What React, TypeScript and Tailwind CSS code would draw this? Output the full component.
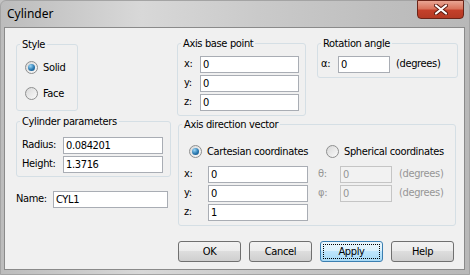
import type { ReactNode } from 'react';

const uiFont = { fontFamily: '"DejaVu Sans Condensed", "Liberation Sans", sans-serif' };

const Radio = ({ checked, label }: { checked?: boolean; label: string }) => (
  <label className="flex h-[13px] items-center gap-[5px] leading-[13px]">
    <span className="flex h-[13px] w-[13px] items-center justify-center rounded-full border border-[#8e8f8f] bg-[linear-gradient(135deg,#d8d8d8,#fafafa)]">
      {checked && (
        <span className="h-[7px] w-[7px] rounded-full bg-[radial-gradient(circle_at_35%_30%,#9ad6f7,#2a79b0_55%,#0f4a7a)]" />
      )}
    </span>
    <span>{label}</span>
  </label>
);

const Field = ({ value, width, disabled }: { value: string; width: string; disabled?: boolean }) => (
  <div
    className={`h-[17px] ${width} border pl-[2px] leading-[15px] ${
      disabled ? 'border-[#c5c5c5] bg-[#f2f2f2] text-[#969696]' : 'border-[#a9adb4] bg-white text-black'
    }`}
  >
    {value}
  </div>
);

const GroupBox = ({ title, className, children }: { title: string; className: string; children: ReactNode }) => (
  <fieldset className={`min-w-0 rounded-[3px] border border-[#d5dfe5] pl-[3px] ${className}`}>
    <legend className="px-[2px] leading-[13px]">{title}</legend>
    {children}
  </fieldset>
);

const Button = ({ label, focused }: { label: string; focused?: boolean }) => (
  <button
    className={`flex h-[21px] w-[63px] items-center justify-center rounded-[3px] border p-[2px] ${
      focused
        ? 'border-[#3c7fb1] bg-[linear-gradient(#eaf6fd_0%,#d9f0fc_50%,#bee6fd_50%,#a7d9f5_100%)]'
        : 'border-[#707070] bg-[linear-gradient(#f2f2f2_0%,#ebebeb_50%,#dddddd_50%,#cfcfcf_100%)]'
    }`}
  >
    <span
      className={`flex h-full w-full items-center justify-center leading-[13px] ${
        focused ? 'border border-dotted border-black' : ''
      }`}
    >
      {label}
    </span>
  </button>
);

const CloseIcon = () => (
  <svg width="14" height="11" viewBox="0 0 14 11">
    <path d="M2 1.5 L12 9.5 M12 1.5 L2 9.5" stroke="#5a1a10" strokeWidth="4" strokeLinecap="round" />
    <path d="M2 1.5 L12 9.5 M12 1.5 L2 9.5" stroke="#ffffff" strokeWidth="2.2" strokeLinecap="round" />
  </svg>
);

export default function App() {
  return (
    <div className="h-[275px] w-[470px] overflow-hidden bg-[#c4c4c4]">
      <div className="flex h-[275px] w-[470px] flex-col rounded-t-[6px] border border-[#a4a4a4] bg-[linear-gradient(90deg,#bcbcbc_0%,#d8d8d8_30%,#cacaca_55%,#bfbfbf_80%,#b8b8b8_100%)]">
        <div className="flex h-[26px] items-start justify-between">
          <span className="ml-[6px] mt-[5px] text-[12px] leading-[16px] text-black" style={{ fontFamily: '"Noto Sans", sans-serif' }}>
            Cylinder
          </span>
          <div className="mr-[5px] flex h-[19px] w-[47px] -mt-px items-center justify-center rounded-b-[4px] border border-[#6b2418] bg-[linear-gradient(#e9a593_0%,#d9745c_45%,#c4402a_55%,#b43a24_100%)]">
            <CloseIcon />
          </div>
        </div>

        <div
          className="ml-[3px] flex h-[243px] w-[461px] border border-[#8a8a8a] bg-[#f0f0f0] pt-[9px] text-[11px] tracking-[-0.35px] text-black"
          style={uiFont}
        >
          {/* left column */}
          <div className="ml-[11px] mt-px flex w-[155px] flex-col">
            <GroupBox title="Style" className="w-[62px] pb-[10px]">
              <div className="ml-[5px] mt-[10px] flex flex-col gap-[13px]">
                <Radio checked label="Solid" />
                <Radio label="Face" />
              </div>
            </GroupBox>

            <GroupBox title="Cylinder parameters" className="mt-[4px] w-[155px] pb-[3px]">
              <div className="ml-[2px] mt-[9px] flex flex-col gap-[2px]">
                <div className="flex items-center">
                  <span className="w-[41px]">Radius:</span>
                  <Field value="0.084201" width="w-[100px]" />
                </div>
                <div className="flex items-center">
                  <span className="w-[41px]">Height:</span>
                  <Field value="1.3716" width="w-[100px]" />
                </div>
              </div>
            </GroupBox>

            <div className="mt-[14px] flex items-center">
              <span className="w-[37px]">Name:</span>
              <Field value="CYL1" width="w-[115px]" />
            </div>
          </div>

          {/* right column */}
          <div className="ml-[6px] flex flex-col">
            <div className="flex items-start">
              <GroupBox title="Axis base point" className="w-[129px] pb-[4px]">
                <div className="ml-[3px] mt-[6px] flex flex-col gap-[2px]">
                  {['x:', 'y:', 'z:'].map((l) => (
                    <div key={l} className="flex items-center">
                      <span className="w-[16px]">{l}</span>
                      <Field value="0" width="w-[99px]" />
                    </div>
                  ))}
                </div>
              </GroupBox>

              <GroupBox title="Rotation angle" className="ml-[11px] w-[141px] pb-[4px]">
                <div className="mt-[6px] flex items-center">
                  <span className="w-[17px]">α:</span>
                  <Field value="0" width="w-[52px]" />
                  <span className="ml-[6px]">(degrees)</span>
                </div>
              </GroupBox>
            </div>

            <GroupBox title="Axis direction vector" className="ml-px mt-[2px] w-[278px] pb-[4px]">
              <div className="ml-[7px] mt-[14px] flex">
                <div className="w-[137px]">
                  <Radio checked label="Cartesian coordinates" />
                </div>
                <Radio label="Spherical coordinates" />
              </div>
              <div className="ml-[2px] mt-[8px] flex flex-col gap-[2px]">
                <div className="flex items-center">
                  <span className="w-[24px]">x:</span>
                  <Field value="0" width="w-[100px]" />
                  <span className="ml-[10px] w-[22px] text-[#969696]">θ:</span>
                  <Field value="0" width="w-[52px]" disabled />
                  <span className="ml-[7px] text-[#969696]">(degrees)</span>
                </div>
                <div className="flex items-center">
                  <span className="w-[24px]">y:</span>
                  <Field value="0" width="w-[100px]" />
                  <span className="ml-[10px] w-[22px] text-[#969696]">φ:</span>
                  <Field value="0" width="w-[52px]" disabled />
                  <span className="ml-[7px] text-[#969696]">(degrees)</span>
                </div>
                <div className="flex items-center">
                  <span className="w-[24px]">z:</span>
                  <Field value="1" width="w-[100px]" />
                </div>
              </div>
            </GroupBox>

            <div className="ml-px mt-[15px] flex gap-[8px]">
              <Button label="OK" />
              <Button label="Cancel" />
              <Button label="Apply" focused />
              <Button label="Help" />
            </div>
          </div>
        </div>
      </div>
    </div>
  );
}
